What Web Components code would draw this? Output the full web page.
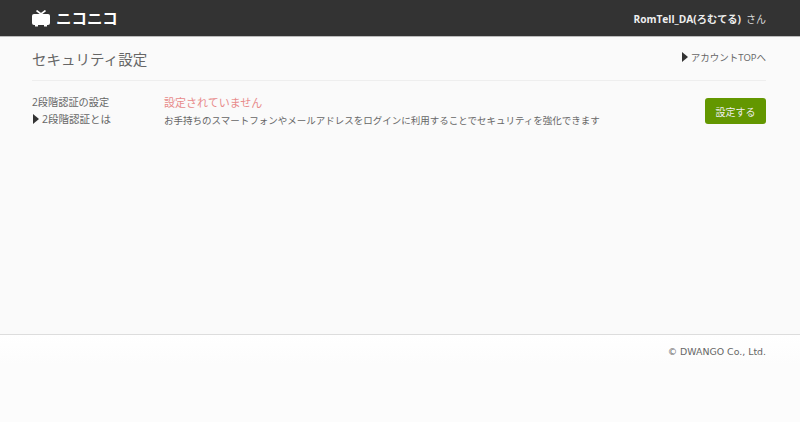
<!DOCTYPE html>
<html lang="ja">
<head>
<meta charset="utf-8">
<title>セキュリティ設定</title>
<style>
  html, body { margin: 0; padding: 0; background: #fff; }
  body { font-family: "Open Sans", "Noto Sans CJK JP", sans-serif; color: #666; height: 422px; overflow: hidden; }
</style>
</head>
<body>
<nico-header user="RomTell_DA(ろむてる)"></nico-header>
<nico-page heading="セキュリティ設定" link="アカウントTOPへ">
  <nico-setting label="2段階認証の設定" help="2段階認証とは" status="設定されていません" button="設定する">
    お手持ちのスマートフォンやメールアドレスをログインに利用することでセキュリティを強化できます
  </nico-setting>
</nico-page>
<nico-footer>© DWANGO Co., Ltd.</nico-footer>

<script>
const arrow = `<svg class="arrow" width="6" height="10" viewBox="0 0 6 10"><path d="M0 0L6 5L0 10Z" fill="#333"/></svg>`;

class NicoHeader extends HTMLElement {
  constructor() {
    super();
    this.attachShadow({ mode: 'open' });
    this.shadowRoot.innerHTML = `
      <style>
        :host { display: flex; box-sizing: border-box; height: 37px; padding: 0 34px 0 32px; align-items: center; justify-content: space-between; background: #333; border-bottom: 1px solid #bbb; }
        .logo { display: flex; align-items: center; gap: 6px; }
        .word { color: #fff; font: 700 15px/20px "Noto Sans CJK JP", sans-serif; width: 62px; transform-origin: left center; transform: scaleX(1.03); white-space: nowrap; }
        .user { font-size: 10px; line-height: 16px; padding-top: 2px; color: #ddd; white-space: nowrap; }
        b { font-weight: 700; font-size: 10.2px; margin-right: 5px; color: #eee; }
      </style>
      <div class="logo">
        <svg width="18" height="17" viewBox="0 0 18 17">
          <path d="M4.5 0.5L9 4L13.5 0.5" fill="none" stroke="#fff" stroke-width="1.6"/>
          <rect x="0" y="4" width="18" height="11" rx="2" fill="#fff"/>
          <rect x="3" y="14" width="3" height="2.5" fill="#fff"/>
          <rect x="12" y="14" width="3" height="2.5" fill="#fff"/>
        </svg>
        <span class="word">ニコニコ</span>
      </div>
      <div class="user"><b></b>さん</div>
    `;
    this.shadowRoot.querySelector('b').textContent = this.getAttribute('user');
  }
}

class NicoPage extends HTMLElement {
  constructor() {
    super();
    this.attachShadow({ mode: 'open' });
    this.shadowRoot.innerHTML = `
      <style>
        :host { display: block; box-sizing: border-box; height: 297px; padding: 0 34px 0 32px; background: #fafafa; }
        .top { display: flex; justify-content: space-between; align-items: center; height: 43px; border-bottom: 1px solid #eee; margin-bottom: 13px; }
        h1 { margin: 0; font-size: 14.5px; font-weight: 400; color: #666; }
        a { display: flex; align-items: center; gap: 3px; font-size: 9.5px; color: #666; text-decoration: none; padding-bottom: 3px; }
      </style>
      <div class="top">
        <h1></h1>
        <a href="#">${arrow}<span></span></a>
      </div>
      <slot></slot>
    `;
    this.shadowRoot.querySelector('h1').textContent = this.getAttribute('heading');
    this.shadowRoot.querySelector('a span').textContent = this.getAttribute('link');
  }
}

class NicoSetting extends HTMLElement {
  constructor() {
    super();
    this.attachShadow({ mode: 'open' });
    this.shadowRoot.innerHTML = `
      <style>
        :host { display: grid; grid-template-columns: 132px 1fr auto; align-items: start; }
        .side { font-size: 10.2px; color: #666; line-height: 16px; }
        .side a { display: flex; align-items: center; gap: 3px; color: #666; font-size: 10.5px; text-decoration: none; padding: 1px 0 0 1px; }
        .status { font-size: 11px; line-height: 18px; color: #e88a8a; }
        .desc { font-size: 9.5px; line-height: 16px; color: #666; margin-top: 1px; }
        button { width: 61px; height: 26px; margin-top: 4px; border: 0; border-radius: 3px; background: #639700; color: #eee; font: 10px "Noto Sans CJK JP", sans-serif; padding: 0; }
      </style>
      <div class="side">
        <div class="label"></div>
        <a href="#">${arrow}<span class="help"></span></a>
      </div>
      <div>
        <div class="status"></div>
        <div class="desc"><slot></slot></div>
      </div>
      <button type="button"></button>
    `;
    const root = this.shadowRoot;
    root.querySelector('.label').textContent = this.getAttribute('label');
    root.querySelector('.help').textContent = this.getAttribute('help');
    root.querySelector('.status').textContent = this.getAttribute('status');
    root.querySelector('button').textContent = this.getAttribute('button');
  }
}

class NicoFooter extends HTMLElement {
  constructor() {
    super();
    this.attachShadow({ mode: 'open' });
    this.shadowRoot.innerHTML = `
      <style>
        :host { display: block; box-sizing: border-box; height: 88px; padding: 9px 34px 0 0; text-align: right; font: 9.4px/16px "DejaVu Sans", sans-serif; color: #666; border-top: 1px solid #ddd; background: linear-gradient(#fff, #fcfcfc 30px); }
      </style>
      <slot></slot>
    `;
  }
}

customElements.define('nico-header', NicoHeader);
customElements.define('nico-page', NicoPage);
customElements.define('nico-setting', NicoSetting);
customElements.define('nico-footer', NicoFooter);
</script>
</body>
</html>
